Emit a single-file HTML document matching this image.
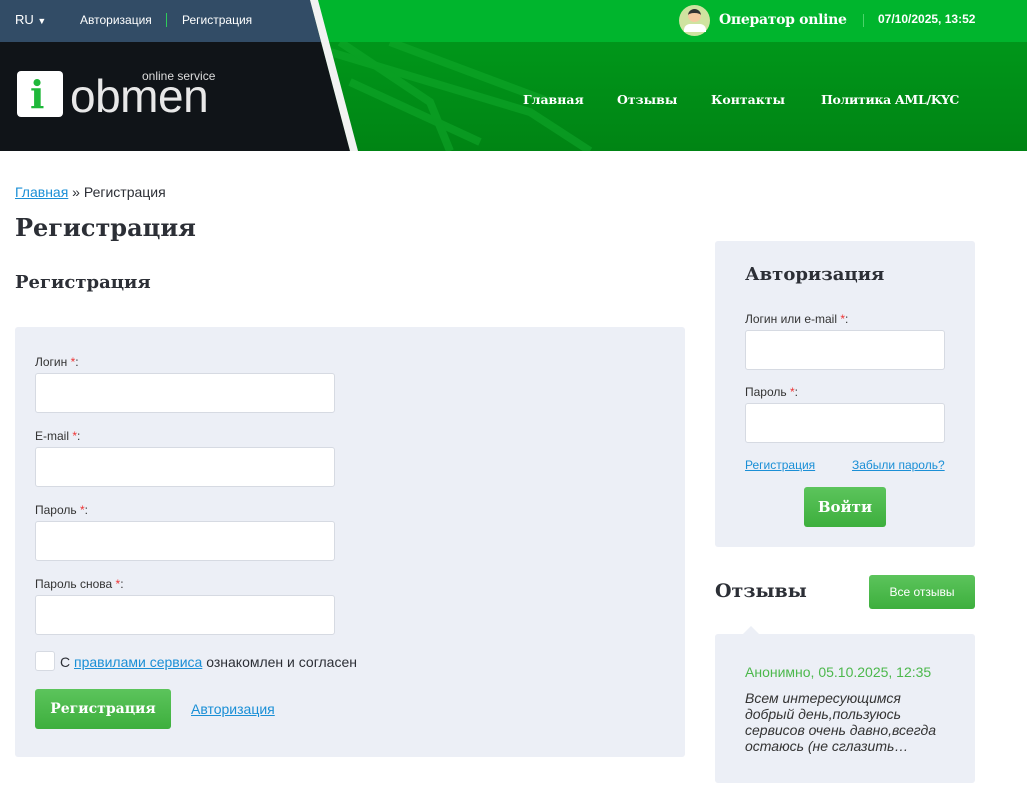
<!DOCTYPE html><html><head><meta charset="utf-8"><style>
*{margin:0;padding:0;box-sizing:border-box}
body{width:1027px;height:790px;overflow:hidden;background:#fff;font-family:"Liberation Sans",sans-serif;color:#2c2f36;position:relative}
.a{position:absolute}
.slab{font-family:"DejaVu Serif","Liberation Serif",serif;font-weight:bold}
.lbl{font-size:12px;color:#333}
.lbl i{color:#e33;font-style:normal}
.inp{position:absolute;width:300px;height:40px;background:#fff;border:1px solid #d6dae2;border-radius:3px}
.btn{position:absolute;background:linear-gradient(#5cc45c,#3daf3d);border-radius:3px;color:#fff;text-align:center}
a{color:#1a8fd6;text-decoration:underline}
</style></head><body>
<div class="a" style="left:0;top:0;width:1027px;height:151px;background:linear-gradient(#009e1c,#008414)"></div>
<div class="a" style="left:0;top:0;width:1027px;height:42px;background:#00b52d"></div>
<svg class="a" style="left:330px;top:42px" width="400" height="109"><g stroke="#14b030" stroke-width="8" fill="none" opacity=".45"><path d="M0 10 L200 70 L260 109"/><path d="M20 40 L150 100"/><path d="M10 0 L100 60 L120 109"/><path d="M60 0 L220 60"/></g></svg>
<div class="a" style="left:0;top:0;width:360px;height:151px;background:#101418;clip-path:polygon(0 0,310px 0,350px 151px,0 151px)"></div>
<div class="a" style="left:0;top:0;width:360px;height:42px;background:#324c66;clip-path:polygon(0 0,310px 0,321px 42px,0 42px)"></div>
<div class="a" style="left:0;top:0;width:360px;height:151px;background:#f2f2f2;clip-path:polygon(310px 0,318px 0,358px 151px,350px 151px)"></div>
<div class="a" style="left:15px;top:12px;font-size:13px;color:#fff">RU <span style="font-size:9px">▼</span></div>
<div class="a" style="left:80px;top:13px;font-size:12px;color:#fff">Авторизация</div>
<div class="a" style="left:166px;top:13px;width:1px;height:14px;background:#2ecc5a"></div>
<div class="a" style="left:182px;top:13px;font-size:12px;color:#fff">Регистрация</div>
<div class="a" style="left:17px;top:71px;width:46px;height:46px;background:#fff;border-radius:4px"></div>
<div class="a slab" style="left:30px;top:72px;font-size:38px;color:#1fb83a">i</div>
<div class="a" style="left:70px;top:73px;font-size:46px;color:#e8e8e8;line-height:46px;letter-spacing:-0.5px">obmen</div>
<div class="a" style="left:142px;top:69px;font-size:12px;color:#ddd">online service</div>
<div class="a" style="left:679px;top:5px;width:31px;height:31px;border-radius:50%;background:#cfe3a0"></div>
<div class="a" style="left:688px;top:9px;width:13px;height:13px;border-radius:50%;background:#f5c9a0;border-top:4px solid #333"></div>
<div class="a" style="left:684px;top:24px;width:22px;height:8px;border-radius:6px 6px 0 0;background:#fff"></div>
<div class="a slab" style="left:719px;top:12px;font-size:14px;color:#fff;letter-spacing:-0.3px">Оператор online</div>
<div class="a" style="left:863px;top:14px;width:1px;height:13px;background:#4bd36a"></div>
<div class="a" style="left:878px;top:12px;font-size:12px;color:#fff;font-weight:bold">07/10/2025, 13:52</div>
<div class="a slab" style="left:523px;top:92px;font-size:12.5px;color:#fff">Главная</div>
<div class="a slab" style="left:617px;top:92px;font-size:12.5px;color:#fff">Отзывы</div>
<div class="a slab" style="left:711px;top:92px;font-size:12.5px;color:#fff">Контакты</div>
<div class="a slab" style="left:821px;top:92px;font-size:12.5px;color:#fff;letter-spacing:-0.3px">Политика AML/KYC</div>

<div class="a" style="left:15px;top:184px;font-size:14px"><a>Главная</a> » Регистрация</div>
<div class="a slab" style="left:15px;top:213px;font-size:24px">Регистрация</div>
<div class="a slab" style="left:15px;top:272px;font-size:18px">Регистрация</div>
<div class="a" style="left:15px;top:327px;width:670px;height:430px;background:#eceff6;border-radius:3px"></div>
<div class="a lbl" style="left:35px;top:355px">Логин <i>*</i>:</div><div class="inp" style="left:35px;top:373px"></div>
<div class="a lbl" style="left:35px;top:429px">E-mail <i>*</i>:</div><div class="inp" style="left:35px;top:447px"></div>
<div class="a lbl" style="left:35px;top:503px">Пароль <i>*</i>:</div><div class="inp" style="left:35px;top:521px"></div>
<div class="a lbl" style="left:35px;top:577px">Пароль снова <i>*</i>:</div><div class="inp" style="left:35px;top:595px"></div>
<div class="a" style="left:35px;top:651px;width:20px;height:20px;background:#fff;border:1px solid #d6dae2;border-radius:3px"></div>
<div class="a" style="left:60px;top:654px;font-size:14px">С <a>правилами сервиса</a> ознакомлен и согласен</div>
<div class="btn slab" style="left:35px;top:689px;width:136px;height:40px;line-height:40px;font-size:14px">Регистрация</div>
<div class="a" style="left:191px;top:701px;font-size:14px"><a>Авторизация</a></div>

<div class="a" style="left:715px;top:241px;width:260px;height:306px;background:#eceff6;border-radius:3px"></div>
<div class="a slab" style="left:745px;top:264px;font-size:18px">Авторизация</div>
<div class="a lbl" style="left:745px;top:312px">Логин или e-mail <i>*</i>:</div><div class="inp" style="left:745px;top:330px;width:200px"></div>
<div class="a lbl" style="left:745px;top:385px">Пароль <i>*</i>:</div><div class="inp" style="left:745px;top:403px;width:200px"></div>
<div class="a" style="left:745px;top:458px;font-size:12px"><a>Регистрация</a></div>
<div class="a" style="left:852px;top:458px;font-size:12px"><a>Забыли пароль?</a></div>
<div class="btn slab" style="left:804px;top:487px;width:82px;height:40px;line-height:40px;font-size:15px">Войти</div>

<div class="a slab" style="left:715px;top:580px;font-size:19px">Отзывы</div>
<div class="btn" style="left:869px;top:575px;width:106px;height:34px;line-height:34px;font-size:12px">Все отзывы</div>
<div class="a" style="left:743px;top:626px;width:0;height:0;border:8px solid transparent;border-bottom-color:#eceff6;border-top:0"></div>
<div class="a" style="left:715px;top:634px;width:260px;height:149px;background:#eceff6;border-radius:3px"></div>
<div class="a" style="left:745px;top:664px;font-size:14px;color:#4cb84c">Анонимно, 05.10.2025, 12:35</div>
<div class="a" style="left:745px;top:690px;width:198px;font-size:14px;line-height:16px;font-style:italic;color:#333">Всем интересующимся добрый день,пользуюсь сервисов очень давно,всегда остаюсь (не сглазить…</div>
</body></html>
